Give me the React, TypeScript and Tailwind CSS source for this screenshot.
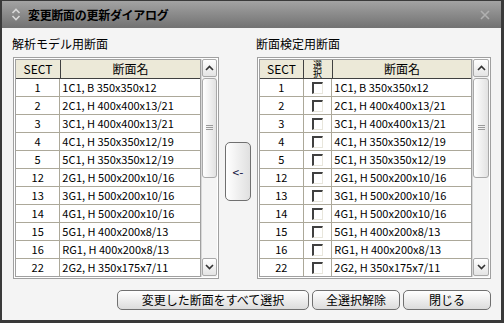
import React from "react"

type Row = [number, string]

const rows: Row[] = [
  [1, "1C1, B 350x350x12"],
  [2, "2C1, H 400x400x13/21"],
  [3, "3C1, H 400x400x13/21"],
  [4, "4C1, H 350x350x12/19"],
  [5, "5C1, H 350x350x12/19"],
  [12, "2G1, H 500x200x10/16"],
  [13, "3G1, H 500x200x10/16"],
  [14, "4G1, H 500x200x10/16"],
  [15, "5G1, H 400x200x8/13"],
  [16, "RG1, H 400x200x8/13"],
  [22, "2G2, H 350x175x7/11"],
]

function ScrollBar({ width }: { width: string }) {
  return (
    <div className={`${width} flex flex-col bg-[#f4f4f4] border-l border-[#d8d8d8]`}>
      <div className="h-[18px] border border-[#a9a9a9] rounded-[2px] bg-gradient-to-b from-white to-[#e4e4e4] flex items-center justify-center">
        <svg width="9" height="6" viewBox="0 0 9 6">
          <path d="M1 5 L4.5 1.5 L8 5" stroke="#333" strokeWidth="1.6" fill="none" />
        </svg>
      </div>
      <div className="mt-[1px] h-[100px] border border-[#a9a9a9] rounded-[3px] bg-gradient-to-r from-white to-[#e2e2e2] flex items-center justify-center">
        <svg width="7" height="6" viewBox="0 0 7 6">
          <path d="M0 0.5 H7 M0 2.5 H7 M0 4.5 H7" stroke="#9a9a9a" strokeWidth="1" />
        </svg>
      </div>
      <div className="flex-1" />
      <div className="h-[18px] mb-[1px] border border-[#a9a9a9] rounded-[2px] bg-gradient-to-b from-white to-[#e4e4e4] flex items-center justify-center">
        <svg width="9" height="6" viewBox="0 0 9 6">
          <path d="M1 1 L4.5 4.5 L8 1" stroke="#333" strokeWidth="1.6" fill="none" />
        </svg>
      </div>
    </div>
  )
}

function CheckBox() {
  return (
    <div className="w-[11px] h-[12px] bg-white border-t-2 border-l-2 border-t-[#404040] border-l-[#404040] border-b border-r border-b-[#e8e6dc] border-r-[#e8e6dc]" />
  )
}

function SectionTable({ withCheck }: { withCheck: boolean }) {
  const sectW = withCheck ? "w-[44px]" : "w-[45px]"
  const nameW = withCheck ? "w-[140px]" : "w-[142px]"
  return (
    <div className={`${withCheck ? "w-[234px]" : "w-[206px]"} h-[222px] border border-[#a0a0a0] bg-white p-[1px] flex`}>
      <div className="flex-1 flex flex-col overflow-hidden border border-[#a0a0a0]">
        <div className="h-[19px] flex shrink-0 bg-[#ece9d8] border-b border-[#404040]">
          <div className={`${sectW} border-r border-[#404040] flex items-center justify-center`}>SECT</div>
          {withCheck && (
            <div className="w-[29px] border-r border-[#404040] flex justify-center">
              <div className="w-[10px] break-all text-[9px] leading-[9px]">選択</div>
            </div>
          )}
          <div className="flex-1 flex items-center justify-center">断面名</div>
        </div>
        {[...rows, [0, ""] as Row].map(([n, name], i) => (
          <div key={i} className="h-[18px] shrink-0 flex border-b border-[#aca899] text-[11px]">
            <div className={`${sectW} border-r border-[#aca899] flex items-center justify-center`}>{n || ""}</div>
            {withCheck && (
              <div className="w-[29px] border-r border-[#aca899] flex items-center justify-center">
                {n ? <CheckBox /> : null}
              </div>
            )}
            <div className={`${nameW} flex items-center pl-[2px] whitespace-nowrap`}>{name}</div>
          </div>
        ))}
      </div>
      <ScrollBar width={withCheck ? "w-[17px]" : "w-[16px]"} />
    </div>
  )
}

function Button({ label, width }: { label: string; width: string }) {
  return (
    <div className={`${width} h-[20px] rounded-[5px] border border-[#707070] bg-gradient-to-b from-white to-[#dcdcdc] flex items-center justify-center`}>
      {label}
    </div>
  )
}

export default function App() {
  return (
    <div className="w-[504px] h-[323px] bg-[#3a3a3a] pl-[2px] pt-[1px] pr-[3px] pb-[3px] text-[12px] text-black font-['Noto_Sans_CJK_JP','Noto_Sans',sans-serif]">
      <div className="h-[27px] bg-gradient-to-b from-[#a3a3a3] to-[#727272] flex items-center pl-[9px] pr-[9px]">
        <svg width="10" height="13" viewBox="0 0 10 13">
          <path d="M1.5 5 L5 1.5 L8.5 5" stroke="#d8d8d8" strokeWidth="1.6" fill="none" />
          <path d="M1.5 8 L5 11.5 L8.5 8" stroke="#d8d8d8" strokeWidth="1.6" fill="none" />
        </svg>
        <div className="ml-[7px] font-bold text-[12px] text-[#000000] tracking-[-0.3px]">
          変更断面の更新ダイアログ
        </div>
        <div className="flex-1" />
        <svg width="10" height="10" viewBox="0 0 10 10" className="mr-[2px]">
          <path d="M1 1 L9 9 M9 1 L1 9" stroke="#b0b0b0" strokeWidth="1.6" />
        </svg>
      </div>
      <div className="h-[292px] bg-[#f4f4f4] pl-[11px] pt-[6px] pr-[10px] flex flex-col">
        <div className="flex">
          <div className="flex flex-col">
            <div className="h-[20px] leading-[20px] -ml-[1px]">解析モデル用断面</div>
            <div className="mt-[3px]">
              <SectionTable withCheck={false} />
            </div>
          </div>
          <div className="ml-[6px] pt-[108px]">
            <div className="w-[26px] h-[59px] rounded-[5px] border border-[#707070] bg-gradient-to-r from-white to-[#e0e0e0] flex items-center justify-center text-[#101040]">
              &lt;-
            </div>
          </div>
          <div className="ml-[6px] flex flex-col">
            <div className="h-[20px] leading-[20px] -ml-[1px]">断面検定用断面</div>
            <div className="mt-[3px]">
              <SectionTable withCheck={true} />
            </div>
          </div>
        </div>
        <div className="mt-[11px] flex justify-end gap-[3px]">
          <Button label="変更した断面をすべて選択" width="w-[192px]" />
          <Button label="全選択解除" width="w-[88px]" />
          <Button label="閉じる" width="w-[88px]" />
        </div>
      </div>
    </div>
  )
}
